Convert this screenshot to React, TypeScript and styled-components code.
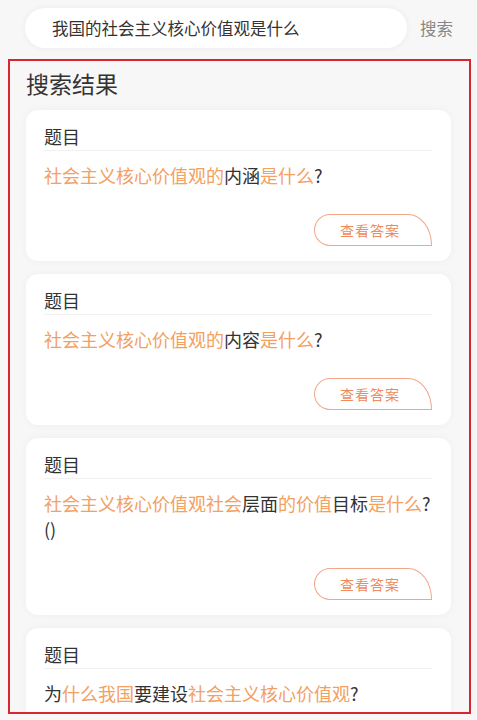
import React from "react";
import styled, { createGlobalStyle } from "styled-components";

const GlobalStyle = createGlobalStyle`
  html, body { margin: 0; padding: 0; background: #f7f7f7; }
  body { font-family: "Noto Sans CJK SC", "Noto Sans", sans-serif; color: #333; }
  * { box-sizing: border-box; }
`;

const Page = styled.div`
  width: 477px;
  height: 720px;
  overflow: hidden;
  background: #f7f7f7;
`;

const SearchRow = styled.div`
  display: flex;
  align-items: center;
  padding: 8px 0 0 25px;
  height: 48px;
`;

const SearchBox = styled.div`
  width: 382px;
  height: 40px;
  border-radius: 20px;
  background: #fff;
  box-shadow: 0 0 6px rgba(0, 0, 0, 0.06);
  display: flex;
  align-items: center;
  padding-left: 27px;
  font-size: 16.5px;
  color: #333;
`;

const SearchButton = styled.div`
  margin-left: 13px;
  font-size: 16.5px;
  color: #888;
`;

const Results = styled.section`
  margin: 11px 6px 0 8px;
  height: 655px;
  border: 2px solid #d8262e;
  overflow: hidden;
  padding: 0 18px 0 16px;
  display: flex;
  flex-direction: column;
`;

const Heading = styled.h2`
  margin: 0;
  flex-shrink: 0;
  font-size: 23px;
  font-weight: 400;
  line-height: 24px;
  color: #333;
  padding-top: 10px;
  height: 49px;
`;

const List = styled.div`
  display: flex;
  flex-direction: column;
  flex-shrink: 0;
  gap: 13px;
`;

const Card = styled.div`
  background: #fff;
  border-radius: 12px;
  box-shadow: 0 0 8px rgba(0, 0, 0, 0.04);
  padding: 13px 19px 15px 18px;
  display: flex;
  flex-direction: column;
  flex-shrink: 0;
`;

const CardTitle = styled.div`
  font-size: 18px;
  line-height: 26px;
  color: #333;
  padding-bottom: 1px;
  border-bottom: 1px solid #f1f1f1;
`;

const Question = styled.div`
  margin-top: 11px;
  font-size: 18px;
  line-height: 26px;
  color: #333;
`;

const Hi = styled.span`
  color: #f3a062;
`;

const Footer = styled.div`
  display: flex;
  justify-content: flex-end;
  margin-top: 26px;
`;

const AnswerButton = styled.button`
  width: 118px;
  height: 32px;
  border: 1px solid #f2a587;
  border-radius: 16px 24px 0 16px / 16px 31px 0 16px;
  background: #fff;
  color: #ee8a5e;
  font-family: "Noto Sans CJK SC", sans-serif;
  font-size: 14px;
  letter-spacing: 1px;
  padding: 0 6px 0 0;
  cursor: pointer;
`;

type Seg = [string, boolean];

const items: Seg[][] = [
  [["社会主义核心价值观的", true], ["内涵", false], ["是什么", true], ["?", false]],
  [["社会主义核心价值观的", true], ["内容", false], ["是什么", true], ["?", false]],
  [
    ["社会主义核心价值观社会", true],
    ["层面", false],
    ["的价值", true],
    ["目标", false],
    ["是什么", true],
    ["?()", false],
  ],
  [["为", false], ["什么我国", true], ["要建设", false], ["社会主义核心价值观", true], ["?", false]],
];

export default function App() {
  return (
    <Page>
      <GlobalStyle />
      <SearchRow>
        <SearchBox>我国的社会主义核心价值观是什么</SearchBox>
        <SearchButton>搜索</SearchButton>
      </SearchRow>
      <Results>
        <Heading>搜索结果</Heading>
        <List>
          {items.map((segs, i) => (
            <Card key={i}>
              <CardTitle>题目</CardTitle>
              <Question>
                {segs.map(([t, h], j) => (h ? <Hi key={j}>{t}</Hi> : <span key={j}>{t}</span>))}
              </Question>
              <Footer>
                <AnswerButton>查看答案</AnswerButton>
              </Footer>
            </Card>
          ))}
        </List>
      </Results>
    </Page>
  );
}
